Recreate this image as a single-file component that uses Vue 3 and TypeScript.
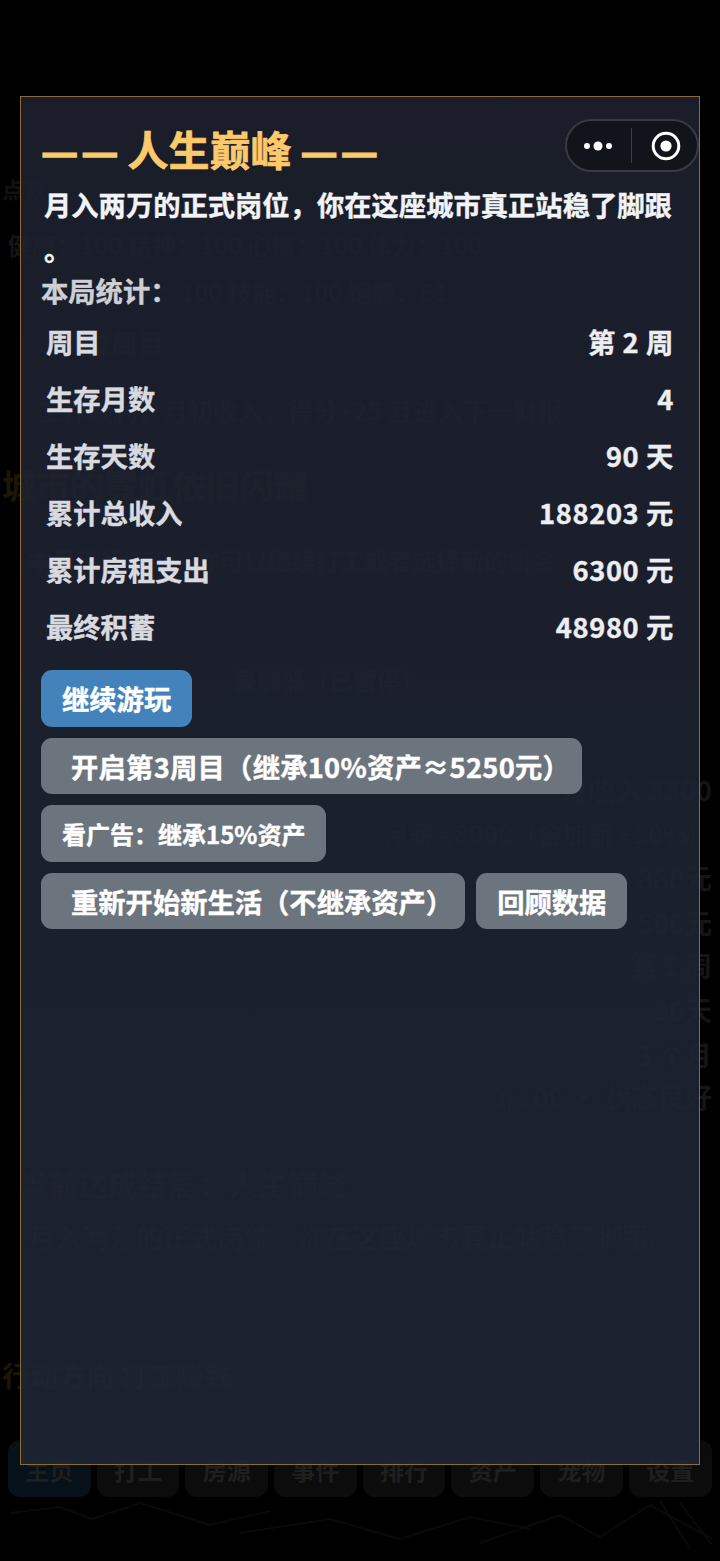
<script setup lang="ts">
interface StatRow {
  label: string;
  value: string;
}

const stats: StatRow[] = [
  { label: '周目', value: '第 2 周' },
  { label: '生存月数', value: '4' },
  { label: '生存天数', value: '90 天' },
  { label: '累计总收入', value: '188203 元' },
  { label: '累计房租支出', value: '6300 元' },
  { label: '最终积蓄', value: '48980 元' }
];

const tabs = ['主页', '打工', '房源', '事件', '排行', '资产', '宠物', '设置'];
</script>

<template>
  <div class="screen">
    <!-- dimmed game page behind the dialog -->
    <div class="page">
      <div class="ghost ghost-a">点数</div>
      <div class="ghost ghost-b">健康：100 精神：100 心情：100 体力：100</div>
      <div class="ghost ghost-c">学识：100 技能：100 饱腹：61</div>
      <div class="ghost ghost-d">第2周目</div>
      <div class="ghost ghost-e">工作顺利，月初收入，得分+25 且进入下一财报</div>
      <div class="ghost ghost-title">城市的霓虹依旧闪耀</div>
      <div class="ghost ghost-f">本月已经结束，你可以继续打工或者选择新的机会</div>
      <div class="ghost ghost-g">录制器（已暂停）</div>
      <div class="ghost ghost-right ghost-h">月收入 3300</div>
      <div class="ghost ghost-right ghost-i">月薪 48000（含加薪 +10%）</div>
      <div class="ghost ghost-right ghost-j">880元</div>
      <div class="ghost ghost-right ghost-k">500元</div>
      <div class="ghost ghost-right ghost-l">第 2 周</div>
      <div class="ghost ghost-right ghost-m">90天</div>
      <div class="ghost ghost-right ghost-n">3 个月</div>
      <div class="ghost ghost-right ghost-o">0/100 · 状态良好</div>
      <div class="ghost ghost-end">当前达成结局：人生巅峰</div>
      <div class="ghost ghost-p">月入两万的正式岗位，你在这座城市真正站稳了脚跟。</div>
      <div class="ghost ghost-q">行动方向 打工赚钱</div>
      <nav class="tabs">
        <div v-for="(tab, i) in tabs" :key="tab" class="tab" :class="{ 'tab-on': i === 0 }">{{ tab }}</div>
      </nav>
      <svg class="scribble" width="720" height="60" viewBox="0 0 720 60" fill="none" stroke="#0a0a0a" stroke-width="2">
        <path d="M10 14 L60 8 L92 20 L140 4 L210 26 L270 12" />
        <path d="M240 34 L330 20 L400 40 L470 18 L530 30" />
        <path d="M480 44 L560 16 L600 38 L650 6 L712 40" />
        <path d="M660 2 L690 50 M680 4 L712 46" />
      </svg>
    </div>

    <!-- wechat capsule is over the dialog -->
    <div class="capsule">
      <svg class="capsule-dots" width="36" height="12" viewBox="0 0 36 12">
        <circle cx="7" cy="6" r="3" fill="#fff" />
        <circle cx="18" cy="6" r="4.5" fill="#fff" />
        <circle cx="29" cy="6" r="3" fill="#fff" />
      </svg>
      <div class="capsule-line"></div>
      <svg class="capsule-target" width="30" height="30" viewBox="0 0 30 30">
        <circle cx="15" cy="15" r="12.8" fill="none" stroke="#fff" stroke-width="3" />
        <circle cx="15" cy="15" r="5.6" fill="#fff" />
      </svg>
    </div>

    <div class="overlay">
      <div class="modal">
        <h2 class="title">
          <span class="dash"><span>—</span><span>—</span></span>
          <span class="title-text">人生巅峰</span>
          <span class="dash"><span>—</span><span>—</span></span>
        </h2>
        <p class="desc">月入两万的正式岗位，你在这座城市真正站稳了脚跟。</p>
        <h3 class="stat-head">本局统计：</h3>
        <div class="stat-list">
          <div v-for="row in stats" :key="row.label" class="stat-row">
            <span class="stat-label">{{ row.label }}</span>
            <span class="stat-value">{{ row.value }}</span>
          </div>
        </div>
        <div class="actions">
          <button class="btn btn-blue">继续游玩</button>
          <button class="btn btn-paren btn-long">开启第3周目（继承10%资产≈5250元）</button>
          <button class="btn btn-small">看广告：继承15%资产</button>
          <button class="btn btn-paren">重新开始新生活（不继承资产）</button>
          <button class="btn">回顾数据</button>
        </div>
      </div>
    </div>
  </div>
</template>

<style>
html,
body {
  margin: 0;
  background: #000;
}
</style>

<style scoped>
.screen {
  position: relative;
  width: 720px;
  height: 1561px;
  overflow: hidden;
  background: #000;
  font-family: "Noto Sans CJK SC", "Noto Sans", sans-serif;
}

.page {
  display: flex;
  flex-direction: column;
  height: 100%;
  box-sizing: border-box;
  padding: 0 8px;
}

.ghost {
  font-size: 27px;
  font-weight: 700;
  line-height: 40px;
  color: #151515;
  white-space: nowrap;
}

.ghost-right {
  text-align: right;
}

.ghost-a { margin-top: 168px; margin-left: -6px; font-size: 22px; color: #121212; }
.ghost-b { margin-top: 17px; font-size: 24px; }
.ghost-c { margin-top: 7px; margin-left: 100px; font-size: 24px; }
.ghost-d { margin-top: 11px; margin-left: 60px; }
.ghost-e { margin-top: 27px; margin-left: 30px; font-size: 25px; }
.ghost-title { margin-top: 35px; margin-left: -6px; font-size: 34px; color: #1d1606; }
.ghost-f { margin-top: 35px; margin-left: 20px; font-size: 24px; }
.ghost-g { margin-top: 80px; margin-left: 225px; font-size: 24px; }
.ghost-h { margin-top: 70px; }
.ghost-i { margin-top: 3px; font-size: 25px; }
.ghost-j { margin-top: 5px; }
.ghost-k { margin-top: 5px; }
.ghost-l { margin-top: 2px; }
.ghost-m { margin-top: 5px; }
.ghost-n { margin-top: 5px; }
.ghost-o { margin-top: 2px; }
.ghost-end { margin-top: 46px; margin-left: 10px; font-size: 30px; color: #1d1606; }
.ghost-p { margin-top: 14px; margin-left: 20px; font-size: 27px; }
.ghost-q { margin-top: 98px; margin-left: -6px; font-size: 28px; color: #1d1606; }

.tabs {
  display: flex;
  gap: 6px;
  margin-top: 45px;
}

.tab {
  flex-shrink: 0;
  width: 82.7px;
  height: 57px;
  border-radius: 12px;
  background: #0c0c0c;
  color: #1f1f1f;
  font-size: 24px;
  font-weight: 700;
  text-align: center;
  line-height: 60px;
}

.tab-on {
  background: #06111a;
}

.scribble {
  margin: 2px 0 0 -8px;
  flex-shrink: 0;
}

.overlay {
  position: absolute;
  inset: 0;
  z-index: 1;
  box-sizing: border-box;
  padding: 96px 20px;
}

.capsule {
  position: absolute;
  z-index: 2;
  top: 119px;
  left: 565px;
  width: 134px;
  height: 53px;
  box-sizing: border-box;
  display: flex;
  align-items: center;
  border: 2px solid #373a43;
  border-radius: 27px;
  background: #12141b;
}

.capsule-dots {
  margin-left: 13px;
}

.capsule-line {
  width: 1px;
  height: 35px;
  margin-left: 15px;
  background: #3c3f47;
}

.capsule-target {
  margin-left: 19px;
}

.modal {
  width: 680px;
  height: 1369px;
  box-sizing: border-box;
  padding: 26px 20px 0;
  border: 1px solid #8a6d34;
  background: linear-gradient(180deg, rgba(29, 33, 46, 0.9), rgba(30, 37, 52, 0.9));
  color: #e8e9ee;
  -webkit-text-stroke: 0.4px currentColor;
}

.title {
  display: flex;
  align-items: center;
  gap: 9px;
  margin: 0;
  font-size: 41px;
  line-height: 52px;
  font-weight: 700;
  color: #fcc96b;
  -webkit-text-stroke: 0.7px currentColor;
}

.title-text {
  margin-top: -2px;
}

.dash {
  display: flex;
  gap: 3px;
  -webkit-text-stroke: 1.4px currentColor;
}

.desc {
  margin: 7px 0 0;
  padding-left: 3px;
  font-size: 27.3px;
  line-height: 45px;
  font-weight: 700;
  color: #f2f3f6;
  line-break: anywhere;
}

.stat-head {
  margin: -2px 0 0;
  font-size: 27.3px;
  line-height: 40px;
  font-weight: 700;
  color: #cdcfd5;
}

.stat-list {
  margin-top: 3px;
}

.stat-row {
  display: flex;
  justify-content: space-between;
  height: 57px;
  padding: 0 5px;
  font-size: 27.3px;
  font-weight: 700;
  line-height: 57px;
}

.stat-label {
  color: #d8dae0;
}

.stat-value {
  color: #eceef2;
  letter-spacing: 0.6px;
}

.actions {
  display: flex;
  flex-wrap: wrap;
  gap: 11px;
  margin-top: 15px;
  width: 640px;
}

.btn {
  height: 56.5px;
  padding: 0 21px;
  border: none;
  border-radius: 11px;
  background: #6c757d;
  color: #fff;
  font-family: inherit;
  font-size: 27.3px;
  font-weight: 700;
  white-space: nowrap;
}

.btn-blue {
  background: #4382ba;
  margin-right: 400px;
}

.btn-paren {
  padding: 0 12px 0 30px;
}

.btn-long {
  letter-spacing: 0.25px;
}

.btn-small {
  font-size: 24px;
  margin-right: 250px;
}
</style>
